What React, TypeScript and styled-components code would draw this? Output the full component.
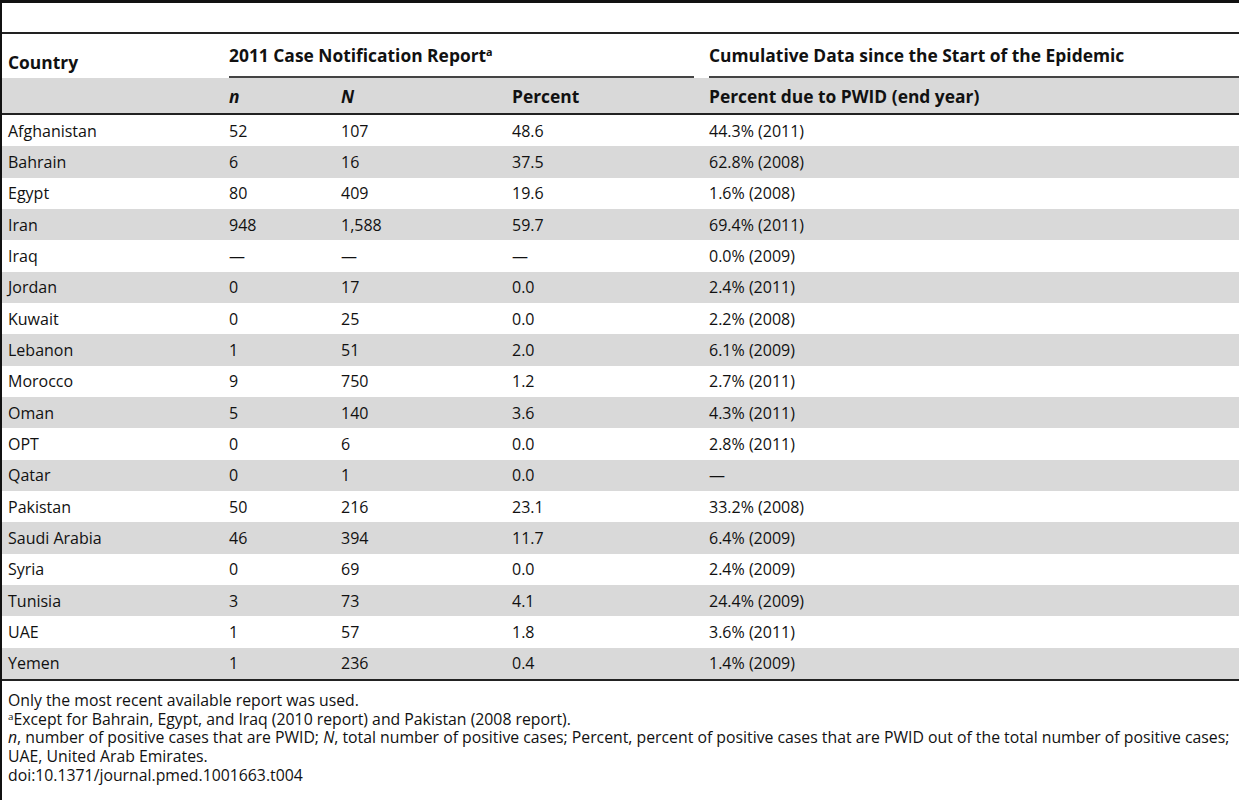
import React from "react"
import styled, { createGlobalStyle } from "styled-components"

const GlobalStyle = createGlobalStyle`
  html, body {
    margin: 0;
    padding: 0;
    background: #fff;
  }
  body {
    font-family: "Open Sans", "Noto Sans", sans-serif;
    color: #111;
  }
`

interface Entry {
  country: string
  n: string
  total: string
  percent: string
  cumulative: string
}

const rows: Entry[] = [
  { country: "Afghanistan", n: "52", total: "107", percent: "48.6", cumulative: "44.3% (2011)" },
  { country: "Bahrain", n: "6", total: "16", percent: "37.5", cumulative: "62.8% (2008)" },
  { country: "Egypt", n: "80", total: "409", percent: "19.6", cumulative: "1.6% (2008)" },
  { country: "Iran", n: "948", total: "1,588", percent: "59.7", cumulative: "69.4% (2011)" },
  { country: "Iraq", n: "—", total: "—", percent: "—", cumulative: "0.0% (2009)" },
  { country: "Jordan", n: "0", total: "17", percent: "0.0", cumulative: "2.4% (2011)" },
  { country: "Kuwait", n: "0", total: "25", percent: "0.0", cumulative: "2.2% (2008)" },
  { country: "Lebanon", n: "1", total: "51", percent: "2.0", cumulative: "6.1% (2009)" },
  { country: "Morocco", n: "9", total: "750", percent: "1.2", cumulative: "2.7% (2011)" },
  { country: "Oman", n: "5", total: "140", percent: "3.6", cumulative: "4.3% (2011)" },
  { country: "OPT", n: "0", total: "6", percent: "0.0", cumulative: "2.8% (2011)" },
  { country: "Qatar", n: "0", total: "1", percent: "0.0", cumulative: "—" },
  { country: "Pakistan", n: "50", total: "216", percent: "23.1", cumulative: "33.2% (2008)" },
  { country: "Saudi Arabia", n: "46", total: "394", percent: "11.7", cumulative: "6.4% (2009)" },
  { country: "Syria", n: "0", total: "69", percent: "0.0", cumulative: "2.4% (2009)" },
  { country: "Tunisia", n: "3", total: "73", percent: "4.1", cumulative: "24.4% (2009)" },
  { country: "UAE", n: "1", total: "57", percent: "1.8", cumulative: "3.6% (2011)" },
  { country: "Yemen", n: "1", total: "236", percent: "0.4", cumulative: "1.4% (2009)" },
]

const Frame = styled.div`
  width: 1237px;
  min-height: 800px;
  border-left: 2px solid #111;
  border-top: 3px solid #111;
  padding-top: 29px;
`

const Table = styled.table`
  width: 100%;
  table-layout: fixed;
  border-collapse: separate;
  border-spacing: 0;
  border-top: 2px solid #222;
  border-bottom: 2px solid #222;
  font-size: 16px;
`

const HeadCell = styled.th`
  text-align: left;
  font-weight: 700;
  font-size: 17.4px;
  padding: 16px 6px 0;
  height: 28px;
  vertical-align: top;
  white-space: nowrap;
`

const GroupCell = styled.th<{ $gap?: number }>`
  text-align: left;
  font-weight: 700;
  font-size: 17.4px;
  padding: 0 ${(p) => p.$gap ?? 0}px 0 6px;
  height: 44px;
  vertical-align: bottom;
  white-space: nowrap;
`

const GroupLabel = styled.div`
  border-bottom: 2px solid #444;
  padding: 0 0 12px;
  height: 34px;
  box-sizing: border-box;
  line-height: 22px;
`

const SubCell = styled.th`
  text-align: left;
  font-weight: 700;
  font-size: 17.4px;
  background: #d9d9d9;
  height: 35px;
  padding: 0 6px;
  border-bottom: 2px solid #222;
  vertical-align: middle;
  white-space: nowrap;
`

const Row = styled.tr<{ $shaded: boolean }>`
  background: ${(p) => (p.$shaded ? "#d9d9d9" : "#fff")};
`

const Cell = styled.td`
  height: 31.33px;
  padding: 0 6px;
  vertical-align: middle;
  white-space: nowrap;
`

const Sup = styled.sup`
  font-size: 0.62em;
  font-weight: inherit;
  line-height: 0;
  vertical-align: 0.55em;
`

const Notes = styled.div`
  padding: 10px 6px 0 6px;
  font-size: 15.8px;
  line-height: 18.75px;

  p {
    margin: 0;
  }
`

const App: React.FC = () => {
  return (
    <>
      <GlobalStyle />
      <Frame>
        <Table>
          <colgroup>
            <col style={{ width: 221 }} />
            <col style={{ width: 112 }} />
            <col style={{ width: 171 }} />
            <col style={{ width: 197 }} />
            <col />
          </colgroup>
          <thead>
            <tr>
              <HeadCell>Country</HeadCell>
              <GroupCell colSpan={3} $gap={9}>
                <GroupLabel>
                  2011 Case Notification Report<Sup>a</Sup>
                </GroupLabel>
              </GroupCell>
              <GroupCell>
                <GroupLabel>Cumulative Data since the Start of the Epidemic</GroupLabel>
              </GroupCell>
            </tr>
            <tr>
              <SubCell />
              <SubCell>
                <i>n</i>
              </SubCell>
              <SubCell>
                <i>N</i>
              </SubCell>
              <SubCell>Percent</SubCell>
              <SubCell>Percent due to PWID (end year)</SubCell>
            </tr>
          </thead>
          <tbody>
            {rows.map((r, i) => (
              <Row key={r.country} $shaded={i % 2 === 1}>
                <Cell>{r.country}</Cell>
                <Cell>{r.n}</Cell>
                <Cell>{r.total}</Cell>
                <Cell>{r.percent}</Cell>
                <Cell>{r.cumulative}</Cell>
              </Row>
            ))}
          </tbody>
        </Table>
        <Notes>
          <p>Only the most recent available report was used.</p>
          <p>
            <Sup>a</Sup>Except for Bahrain, Egypt, and Iraq (2010 report) and Pakistan (2008 report).
          </p>
          <p>
            <i>n</i>, number of positive cases that are PWID; <i>N</i>, total number of positive cases;
            Percent, percent of positive cases that are PWID out of the total number of positive cases;
            UAE, United Arab Emirates.
          </p>
          <p>doi:10.1371/journal.pmed.1001663.t004</p>
        </Notes>
      </Frame>
    </>
  )
}

export default App
